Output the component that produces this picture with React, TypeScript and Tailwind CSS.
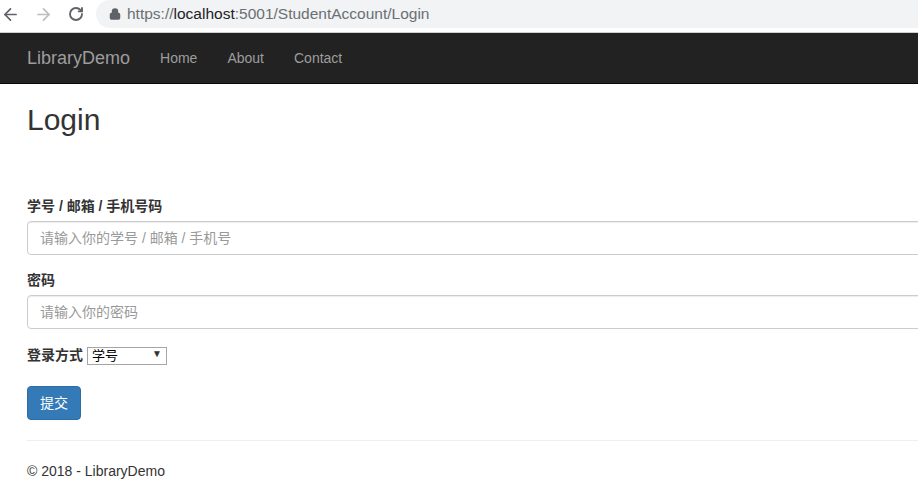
import React from 'react';
import { ArrowLeft, ArrowRight, RotateCw, Lock } from 'lucide-react';

const cjk = '"Liberation Sans", "Noto Sans CJK SC", Arial, sans-serif';

const BrowserBar: React.FC = () => (
  <div className="h-[33px] bg-white flex items-start border-b border-[#cfcfcf]">
    <div className="flex items-center h-[28px] pl-[1px] gap-[14px] text-[#5f6368]">
      <ArrowLeft size={19} strokeWidth={2.2} />
      <ArrowRight size={19} strokeWidth={2.2} className="text-[#bdbdbd]" />
      <RotateCw size={16} strokeWidth={2.8} className="ml-[1px]" />
    </div>
    <div className="ml-[12px] h-[28px] flex-1 bg-[#f1f3f4] rounded-l-full flex items-center pl-[13px]">
      <Lock size={12} strokeWidth={3} className="text-[#5f6368]" fill="#5f6368" />
      <span className="ml-[6px] text-[15.5px] text-[#6b6f73]">
        https://<span className="text-[#202124]">localhost</span>:5001/StudentAccount/Login
      </span>
    </div>
  </div>
);

const Navbar: React.FC = () => (
  <div className="h-[51px] bg-[#222222] border-b border-[#080808] flex items-center pl-[27px]">
    <span className="text-[18px] text-[#9d9d9d] mr-[30px]">LibraryDemo</span>
    <nav className="flex gap-[30px] text-[14px] text-[#9d9d9d]">
      <span>Home</span>
      <span>About</span>
      <span>Contact</span>
    </nav>
  </div>
);

export default function App() {
  return (
    <div className="w-[918px] h-[489px] overflow-hidden bg-white text-[#333] text-[14px] leading-[20px]" style={{ fontFamily: cjk }}>
      <BrowserBar />
      <Navbar />
      <div className="w-[1100px] pl-[27px]">
        <h2 className="text-[30px] leading-[33px] mt-[19px] mb-0">Login</h2>
        <form className="mt-[60px]">
          <div className="mb-[15px]">
            <label className="block font-bold mb-[5px]">学号 / 邮箱 / 手机号码</label>
            <input
              className="block w-full h-[34px] px-[12px] border border-[#ccc] rounded-[4px] shadow-[inset_0_1px_1px_rgba(0,0,0,0.075)] placeholder:text-[#999] outline-none"
              placeholder="请输入你的学号 / 邮箱 / 手机号"
            />
          </div>
          <div className="mb-[15px]">
            <label className="block font-bold mb-[5px]">密码</label>
            <input
              type="password"
              className="block w-full h-[34px] px-[12px] border border-[#ccc] rounded-[4px] shadow-[inset_0_1px_1px_rgba(0,0,0,0.075)] placeholder:text-[#999] outline-none"
              placeholder="请输入你的密码"
            />
          </div>
          <div className="flex items-center h-[22px]">
            <label className="font-bold mr-[4px]">登录方式</label>
            <div className="relative">
              <select className="appearance-none w-[80px] h-[18px] border border-[#a6a6a6] text-[13px] leading-[16px] pl-[4px] text-black bg-white outline-none">
                <option>学号</option>
                <option>邮箱</option>
                <option>手机号</option>
              </select>
              <span className="absolute right-[5px] top-[2px] text-[10px] leading-[14px] text-[#333] pointer-events-none">▼</span>
            </div>
          </div>
          <button
            type="button"
            className="mt-[20px] w-[54px] h-[34px] bg-[#337ab7] border border-[#2e6da4] rounded-[4px] text-white text-[14px]"
          >
            提交
          </button>
        </form>
        <hr className="mt-[20px] border-t border-[#eee]" />
        <footer className="mt-[20px] text-[14px]">© 2018 - LibraryDemo</footer>
      </div>
    </div>
  );
}
